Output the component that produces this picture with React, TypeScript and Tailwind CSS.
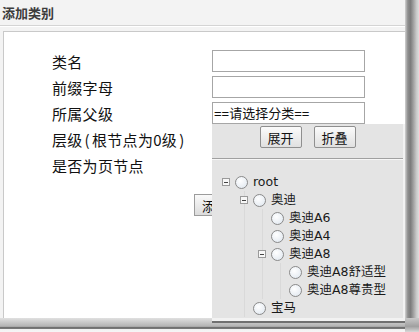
import React from "react";

type Node = { label: string; toggle?: boolean; children?: Node[] };

const tree: Node = {
  label: "root",
  toggle: true,
  children: [
    {
      label: "奥迪",
      toggle: true,
      children: [
        { label: "奥迪A6" },
        { label: "奥迪A4" },
        {
          label: "奥迪A8",
          toggle: true,
          children: [{ label: "奥迪A8舒适型" }, { label: "奥迪A8尊贵型" }],
        },
      ],
    },
    { label: "宝马" },
  ],
};

const treeFont = { fontFamily: '"DejaVu Sans","Noto Sans CJK SC",sans-serif' };
const cjk = { fontFamily: '"Noto Sans CJK SC",sans-serif' };
const selFont = { fontFamily: '"Liberation Sans","Noto Sans CJK SC",sans-serif' };

function TreeNode({ node }: { node: Node }) {
  return (
    <div>
      <div className="flex h-[18px] items-center">
        <div className="flex w-[13px] items-center">
          {node.toggle && (
            <div className="flex h-[8px] w-[8px] items-center justify-center border border-[#9a9a9a] bg-[#f7f7f7]">
              <div className="h-px w-[4px] bg-[#444]" />
            </div>
          )}
        </div>
        <div className="h-[13px] w-[13px] rounded-full border border-[#8a8a8a] bg-[radial-gradient(circle_at_40%_35%,#ffffff,#dde5ee)]" />
        <span className="ml-[5px] text-[12.5px] leading-none text-[#1a1a1a]">{node.label}</span>
      </div>
      {node.children && (
        <div className="ml-[18px] bg-[linear-gradient(#d9d9d9,#d9d9d9)] bg-no-repeat bg-[length:1px_100%] bg-[position:4px_0]">
          {node.children.map((c) => (
            <TreeNode key={c.label} node={c} />
          ))}
        </div>
      )}
    </div>
  );
}

export default function App() {
  const labels = ["类名", "前缀字母", "所属父级", "层级(根节点为0级)", "是否为页节点"];
  return (
    <div className="relative flex h-[332px] w-[419px] flex-col overflow-hidden bg-[#f3f3f3]" style={cjk}>
      <div className="flex h-[318px]">
        <div className="flex w-[405px] flex-col">
          <div className="flex h-[25px] items-center px-[2px]">
            <span className="text-[13px] font-bold leading-none text-[#3c3c3c]">添加类别</span>
          </div>
          <div className="h-px bg-[#d4d4d4]" />
          <div className="h-px bg-white" />
          <div className="h-[4px]" />
          <div className="ml-[3px] flex-1 border-l border-t border-[#c9c9c9] bg-white pl-[48px] pt-[16px]">
            <div className="grid grid-cols-[160px_153px]">
              {labels.map((l, i) => (
                <React.Fragment key={l}>
                  <div className="flex h-[26px] items-center text-[15px] leading-none tracking-[0.3px] text-[#111]">
                    {i === 3 ? (
                      <>
                        层级<span className="px-[2px]">(</span>根节点为0级<span className="px-[2px]">)</span>
                      </>
                    ) : (
                      l
                    )}
                  </div>
                  <div className="flex h-[26px] items-center">
                    {i < 2 && <div className="h-[22px] w-[153px] border border-[#a6a6a6] bg-white" />}
                    {i === 2 && (
                      <div
                        className="flex h-[22px] w-[153px] items-center border border-[#a6a6a6] bg-white pl-px text-[13px] leading-none text-[#111]"
                        style={selFont}
                      >
                        ==请选择分类==
                      </div>
                    )}
                  </div>
                </React.Fragment>
              ))}
            </div>
            <div className="ml-[142px] mt-[16px] flex">
              <div className="flex h-[22px] items-center border border-[#9c9c9c] bg-[linear-gradient(#fafafa,#dcdcdc)] px-[7px] text-[13px] leading-none text-[#111]">
                添加
              </div>
            </div>
          </div>
        </div>
        <div className="flex-1 bg-[linear-gradient(to_right,#d2d2d2,#8e8e8e_20%,#7c7c7c_40%,#a4a4a4_62%,#c9c9c9_82%,#dedede)]" />
      </div>
      <div className="flex h-[14px]">
        <div className="w-[405px] bg-[linear-gradient(to_bottom,#e0e0e0,#b2b2b2_60%,#6e6e6e_66%,#7a7a7a_78%,#f2f2f2_82%,#f6f6f6)]" />
        <div className="flex-1 bg-[linear-gradient(to_bottom,#c8c8c8,#a0a0a0_60%,#d8d8d8)]" />
      </div>

      <div className="absolute left-[212px] top-[124px] flex h-[197px] w-[193px] flex-col border-b-[3px] border-r-2 border-[#f2f2f2] bg-[#e4e4e4] shadow-[0_2px_0_#707070]">
        <div className="mt-[2px] flex justify-center gap-[12px]">
          {["展开", "折叠"].map((b) => (
            <div
              key={b}
              className="flex h-[22px] w-[42px] items-center justify-center rounded-[2px] border border-[#8f8f8f] bg-[linear-gradient(#fbfbfb,#e0e0e0)] text-[13px] leading-none text-[#111]"
            >
              {b}
            </div>
          ))}
        </div>
        <div className="mt-[10px] h-[2px] border-b border-t border-b-[#f6f6f6] border-t-[#a0a0a0]" />
        <div className="overflow-hidden pl-[10px] pt-[13px]" style={treeFont}>
          <TreeNode node={tree} />
        </div>
      </div>
    </div>
  );
}
